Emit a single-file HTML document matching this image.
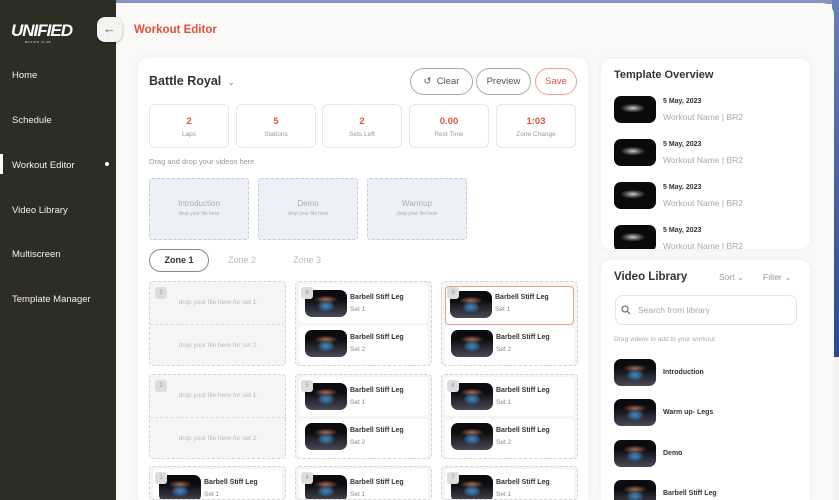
<!DOCTYPE html>
<html style="width:839px;height:500px;overflow:hidden"><head><meta charset="utf-8"><style>
*{box-sizing:border-box;margin:0;padding:0}
body{width:839px;height:500px;overflow:hidden;background:#f4f3f1;font-family:"Liberation Sans",sans-serif;position:relative}
.a{position:absolute}
.sb{left:0;top:0;width:116px;height:500px;background:#2e2d24}
.nav{left:12px;color:#f2f1ea;font-size:9.5px}
.main{left:116px;top:3px;width:718px;height:497px;background:#faf9f7;border-top-right-radius:12px}
.card{background:#fff;border-radius:10px;box-shadow:0 0 8px rgba(0,0,0,.05)}
.btn{height:27px;border:1.3px solid #aaa;border-radius:14px;font-size:9.5px;color:#555;display:flex;align-items:center;justify-content:center;top:68px}
.stat{top:104px;width:80px;height:44px;border:1px solid #e6e6e6;border-radius:6px;text-align:center}
.stat b{display:block;color:#e0553c;font-size:9.5px;margin-top:11px}
.stat span{display:block;color:#999;font-size:6.5px;margin-top:4px}
.drop{top:178px;width:100px;height:62px;background:#eef0f7;border:1px dashed #c9ccd8;border-radius:3px;text-align:center;color:#a9adbc}
.drop b{display:block;font-weight:normal;font-size:8px;margin-top:20px}
.drop span{display:block;font-size:5px;margin-top:3px}
.cell{width:137px;height:85px;border:1px dashed #d6d6d6;border-radius:4px;background:#f5f5f5;overflow:hidden}
.half{position:absolute;left:3px;right:3px;height:39px;background:#fff;border-radius:4px}
.empty{position:absolute;left:0;right:0;height:42px;text-align:center;font-size:6.5px;color:#bbb;line-height:42px}
.num{position:absolute;left:5px;top:5px;width:12px;height:12px;background:#ddd;border-radius:3px;font-size:6px;color:#999;text-align:center;line-height:12px;z-index:2}
.th{position:absolute;width:42px;height:27px;border-radius:7px;background:radial-gradient(ellipse 9px 6px at 50% 60%,#4a86b8,#2d5a80 60%,transparent 100%),radial-gradient(ellipse 12px 4px at 50% 35%,#b06a50,transparent),linear-gradient(#0c0c10 35%,#4a4a58)}
.tt{position:absolute;font-size:7px;font-weight:bold;color:#333}
.ts{position:absolute;font-size:6.5px;color:#888}
.tov{position:absolute;width:42px;height:27px;border-radius:7px;background:radial-gradient(ellipse 14px 5px at 45% 45%,#ccc,#555 50%,transparent 90%),#0a0a0a}
</style></head><body>
<div class="a" style="left:0;top:0;width:839px;height:4px;background:#8594bd"></div>
<div class="a" style="left:832px;top:0;width:7px;height:357px;background:linear-gradient(#6a7fb5,#2a4a92)"></div>
<div class="a main"></div>
<div class="a sb"></div>
<div class="a" style="left:11px;top:21px;color:#fff;font-weight:bold;font-size:17px;letter-spacing:-1px;font-style:italic">UNIFIED</div>
<div class="a" style="left:25px;top:40px;color:#ddd;font-size:3px;letter-spacing:.5px">BOXING CLUB</div>
<div class="a nav" style="top:70px">Home</div>
<div class="a nav" style="top:115px">Schedule</div>
<div class="a" style="left:0;top:154px;width:3px;height:20px;background:#fff"></div>
<div class="a nav" style="top:160px">Workout Editor</div>
<div class="a" style="left:105px;top:162px;width:4px;height:4px;background:#fff;border-radius:50%"></div>
<div class="a nav" style="top:205px">Video Library</div>
<div class="a nav" style="top:249px">Multiscreen</div>
<div class="a nav" style="top:294px">Template Manager</div>
<div class="a" style="left:97px;top:17px;width:25px;height:25px;background:#f4f4f2;border-radius:8px;box-shadow:0 1px 3px rgba(0,0,0,.3);color:#666;font-size:13px;text-align:center;line-height:24px">←</div>
<div class="a" style="left:134px;top:24px;color:#e0533a;font-weight:bold;font-size:11.5px">Workout Editor</div>

<div class="a card" style="left:138px;top:58px;width:450px;height:442px;border-bottom-left-radius:0;border-bottom-right-radius:0"></div>
<div class="a" style="left:149px;top:74px;font-weight:bold;font-size:12.5px;color:#333">Battle Royal <span style="font-weight:normal;font-size:9px;color:#777">&nbsp;⌄</span></div>
<div class="a btn" style="left:410px;width:63px">↺&nbsp; Clear</div>
<div class="a btn" style="left:476px;width:55px">Preview</div>
<div class="a btn" style="left:535px;width:42px;border-color:#eaa08f;color:#e0553c">Save</div>
<div class="a stat" style="left:149px"><b>2</b><span>Laps</span></div>
<div class="a stat" style="left:236px"><b>5</b><span>Stations</span></div>
<div class="a stat" style="left:322px"><b>2</b><span>Sets Left</span></div>
<div class="a stat" style="left:409px"><b>0.00</b><span>Rest Time</span></div>
<div class="a stat" style="left:496px"><b>1:03</b><span>Zone Change</span></div>
<div class="a" style="left:149px;top:157px;font-size:7.5px;color:#999">Drag and drop your videos here</div>
<div class="a drop" style="left:149px"><b>Introduction</b><span>drop your file here</span></div>
<div class="a drop" style="left:258px"><b>Demo</b><span>drop your file here</span></div>
<div class="a drop" style="left:367px"><b>Warmup</b><span>drop your file here</span></div>
<div class="a" style="left:149px;top:249px;width:60px;height:23px;border:1.3px solid #888;border-radius:12px;font-size:9px;font-weight:bold;color:#333;text-align:center;line-height:21px">Zone 1</div>
<div class="a" style="left:228px;top:255px;font-size:9px;color:#bbb">Zone 2</div>
<div class="a" style="left:293px;top:255px;font-size:9px;color:#bbb">Zone 3</div>

<div class="a cell" style="left:149px;top:281px"><div class="num">3</div><div class="empty" style="top:0">drop your file here for set 1</div><div class="empty" style="top:42px;border-top:1px dashed #ddd">drop your file here for set 2</div></div>
<div class="a cell" style="left:149px;top:374px"><div class="num">2</div><div class="empty" style="top:0">drop your file here for set 1</div><div class="empty" style="top:42px;border-top:1px dashed #ddd">drop your file here for set 2</div></div>

<div class="a cell" style="left:295px;top:281px"><div class="num">6</div><div class="half" style="top:2px"><div class="th" style="left:6px;top:6px"></div><div class="tt" style="left:51px;top:10px">Barbell Stiff Leg</div><div class="ts" style="left:51px;top:22px">Set 1</div></div><div class="half" style="top:44px"><div class="th" style="left:6px;top:4px"></div><div class="tt" style="left:51px;top:8px">Barbell Stiff Leg</div><div class="ts" style="left:51px;top:20px">Set 2</div></div></div>
<div class="a cell" style="left:441px;top:281px"><div class="num">9</div><div class="half" style="top:4px;border:1px solid #eaa08f"><div class="th" style="left:4px;top:4px"></div><div class="tt" style="left:49px;top:7px">Barbell Stiff Leg</div><div class="ts" style="left:49px;top:19px">Set 1</div></div><div class="half" style="top:44px"><div class="th" style="left:6px;top:4px"></div><div class="tt" style="left:51px;top:8px">Barbell Stiff Leg</div><div class="ts" style="left:51px;top:20px">Set 2</div></div></div>
<div class="a cell" style="left:295px;top:374px"><div class="num">5</div><div class="half" style="top:2px"><div class="th" style="left:6px;top:6px"></div><div class="tt" style="left:51px;top:10px">Barbell Stiff Leg</div><div class="ts" style="left:51px;top:22px">Set 1</div></div><div class="half" style="top:44px"><div class="th" style="left:6px;top:4px"></div><div class="tt" style="left:51px;top:8px">Barbell Stiff Leg</div><div class="ts" style="left:51px;top:20px">Set 2</div></div></div>
<div class="a cell" style="left:441px;top:374px"><div class="num">8</div><div class="half" style="top:2px"><div class="th" style="left:6px;top:6px"></div><div class="tt" style="left:51px;top:10px">Barbell Stiff Leg</div><div class="ts" style="left:51px;top:22px">Set 1</div></div><div class="half" style="top:44px"><div class="th" style="left:6px;top:4px"></div><div class="tt" style="left:51px;top:8px">Barbell Stiff Leg</div><div class="ts" style="left:51px;top:20px">Set 2</div></div></div>
<div class="a cell" style="left:149px;top:466px;height:34px"><div class="num">1</div><div class="half" style="top:2px"><div class="th" style="left:6px;top:6px"></div><div class="tt" style="left:51px;top:10px">Barbell Stiff Leg</div><div class="ts" style="left:51px;top:22px">Set 1</div></div></div>
<div class="a cell" style="left:295px;top:466px;height:34px"><div class="num">4</div><div class="half" style="top:2px"><div class="th" style="left:6px;top:6px"></div><div class="tt" style="left:51px;top:10px">Barbell Stiff Leg</div><div class="ts" style="left:51px;top:22px">Set 1</div></div></div>
<div class="a cell" style="left:441px;top:466px;height:34px"><div class="num">7</div><div class="half" style="top:2px"><div class="th" style="left:6px;top:6px"></div><div class="tt" style="left:51px;top:10px">Barbell Stiff Leg</div><div class="ts" style="left:51px;top:22px">Set 1</div></div></div>

<div class="a card" style="left:601px;top:59px;width:209px;height:190px;overflow:hidden">
<div class="a" style="left:13px;top:10px;font-size:11px;font-weight:bold;color:#333">Template Overview</div>
<div class="tov" style="left:13px;top:37px"></div><div class="tt" style="left:62px;top:39px">5 May, 2023</div><div class="ts" style="left:62px;top:53px;font-size:8.5px;color:#aaa">Workout Name | BR2</div>
<div class="tov" style="left:13px;top:80px"></div><div class="tt" style="left:62px;top:82px">5 May, 2023</div><div class="ts" style="left:62px;top:96px;font-size:8.5px;color:#aaa">Workout Name | BR2</div>
<div class="tov" style="left:13px;top:123px"></div><div class="tt" style="left:62px;top:125px">5 May, 2023</div><div class="ts" style="left:62px;top:139px;font-size:8.5px;color:#aaa">Workout Name | BR2</div>
<div class="tov" style="left:13px;top:166px"></div><div class="tt" style="left:62px;top:168px">5 May, 2023</div><div class="ts" style="left:62px;top:182px;font-size:8.5px;color:#aaa">Workout Name | BR2</div>
</div>

<div class="a card" style="left:601px;top:260px;width:209px;height:240px;overflow:hidden;border-bottom-left-radius:0;border-bottom-right-radius:0">
<div class="a" style="left:13px;top:11px;font-size:11.5px;font-weight:bold;color:#333">Video Library</div>
<div class="a" style="left:118px;top:12px;font-size:8.5px;color:#999">Sort ⌄</div>
<div class="a" style="left:162px;top:12px;font-size:8.5px;color:#999">Filter ⌄</div>
<div class="a" style="left:14px;top:35px;width:182px;height:30px;border:1px solid #e4e4e4;border-radius:8px"></div>
<svg class="a" style="left:20px;top:45px" width="10" height="10" viewBox="0 0 10 10"><circle cx="4" cy="4" r="3" fill="none" stroke="#777" stroke-width="1.3"/><path d="M6.2 6.2L9 9" stroke="#777" stroke-width="1.3"/></svg>
<div class="a" style="left:37px;top:45px;font-size:8.5px;color:#aaa">Search from library</div>
<div class="a" style="left:13px;top:76px;font-size:6.5px;color:#aaa">Drag videos to add to your workout</div>
<div class="th" style="left:13px;top:99px"></div><div class="tt" style="left:62px;top:109px">Introduction</div>
<div class="th" style="left:13px;top:139px"></div><div class="tt" style="left:62px;top:149px">Warm up- Legs</div>
<div class="th" style="left:13px;top:180px"></div><div class="tt" style="left:62px;top:190px">Demo</div>
<div class="th" style="left:13px;top:220px"></div><div class="tt" style="left:62px;top:230px">Barbell Stiff Leg</div>
</div>
</body></html>
